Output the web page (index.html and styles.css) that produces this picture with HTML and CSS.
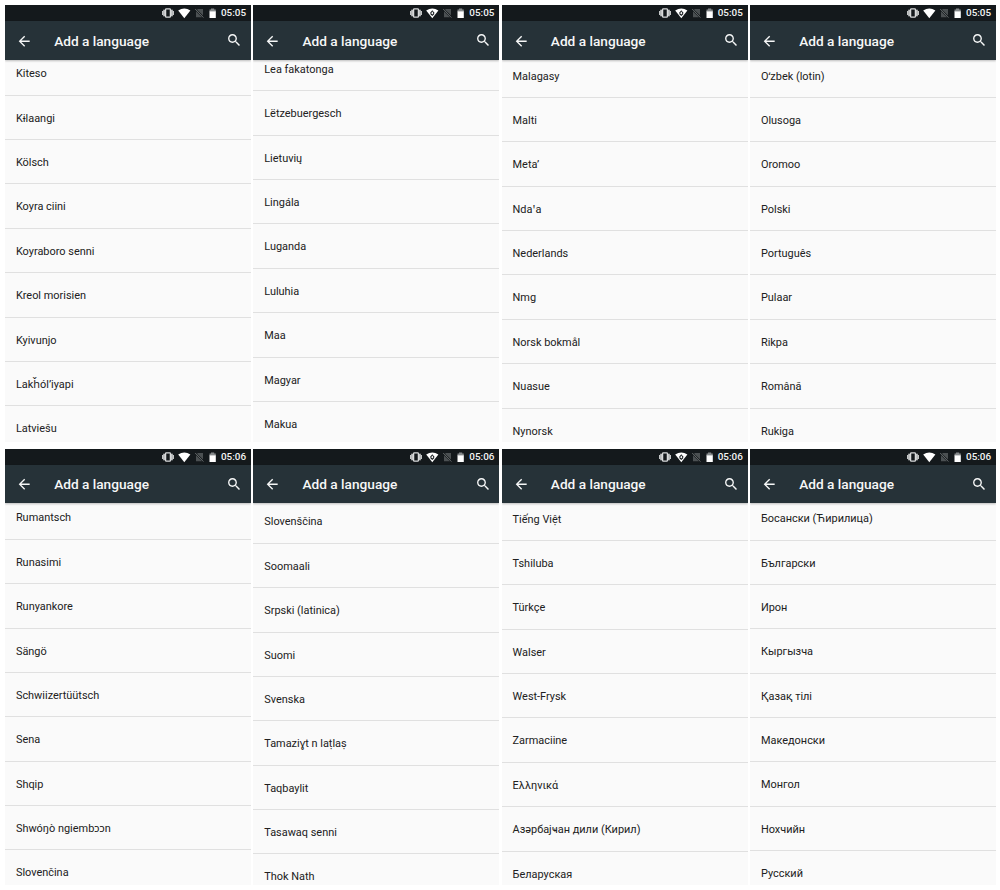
FILE: index.html
```
<!DOCTYPE html>
<html lang="en">
<head>
<meta charset="utf-8">
<title>Add a language</title>
<link rel="stylesheet" href="styles.css">
</head>
<body>
<main class="board" id="board"></main>
<template id="screen">
  <section class="screen">
    <div class="status">
      <svg class="status-icons" viewBox="0 0 56 16">
        <g fill="#c4c6c7"><rect x="1" y="6" width="1.5" height="4"/><rect x="2.2" y="4.7" width="1.8" height="6.6"/><rect x="11.5" y="6" width="1.5" height="4"/><rect x="10" y="4.7" width="1.8" height="6.6"/></g>
        <rect x="4.6" y="3.8" width="4.8" height="8.4" rx=".7" fill="none" stroke="#d8dadb" stroke-width="1.3"/>
        <path d="M17.2 5.4Q23.3 1.4 29.4 5.4L23.3 13.2Z" fill="#fff"/>
        <path class="notch" d="M23.3 5.2L25.2 7.4V9.2L23.3 10.9 21.4 9.2V7.4Z" fill="#14191c"/>
        <path class="notch" d="M23.3 6.6L24.4 8.2 23.3 9.6 22.2 8.2Z" fill="#fff"/>
        <path d="M37 4H42V10.4L36 4.8ZM35 6.2L41 12.2H35Z" fill="#4b5052"/>
        <path d="M34.2 4L42.4 12.6" stroke="#6c7072" stroke-width=".9"/>
        <path d="M50 3.6H53.2V4.6H54.8V7H48.5V4.6H50Z" fill="#85898b"/>
        <rect x="48.5" y="6.4" width="6.3" height="6.6" fill="#fff"/>
      </svg>
      <span class="clock"></span>
    </div>
    <header class="bar">
      <svg class="icon" viewBox="0 0 24 24"><path d="M20 11H7.83l5.59-5.59L12 4l-8 8 8 8 1.41-1.41L7.83 13H20v-2z"/></svg>
      <h1 class="title">Add a language</h1>
      <svg class="icon search" viewBox="0 0 24 24"><path d="M15.5 14h-.79l-.28-.27C15.41 12.59 16 11.11 16 9.5 16 5.91 13.09 3 9.5 3S3 5.91 3 9.5 5.91 16 9.5 16c1.61 0 3.09-.59 4.23-1.57l.27.28v.79l5 4.99L20.49 19l-4.99-5zm-6 0C7.01 14 5 11.99 5 9.5S7.01 5 9.5 5 14 7.01 14 9.5 11.99 14 9.5 14z"/></svg>
    </header>
    <div class="view"><ul class="list"></ul></div>
  </section>
</template>
<script src="app.js"></script>
</body>
</html>
```
FILE: styles.css
```
* { box-sizing: border-box; }
body { margin: 0; background: #fff; font-family: Roboto, "Noto Sans", "DejaVu Sans", sans-serif; }
.board {
  display: grid;
  grid-template-columns: repeat(4, 246px);
  grid-auto-rows: 436.5px;
  gap: 7.2px 2.35px;
  padding: 5px;
  height: 890px;
  overflow: hidden;
}
.screen { display: flex; flex-direction: column; overflow: hidden; background: #fafafa; }
.status {
  flex: none;
  height: 16px;
  padding-right: 5.5px;
  display: flex;
  align-items: center;
  justify-content: flex-end;
  background: #14191c;
  color: #f3f4f4;
}
.status-icons { width: 56px; height: 16px; margin-right: 4px; }
.notch { display: none; }
.secured .notch { display: inline; }
.clock { width: 24.5px; font-size: 9.9px; line-height: 16px; font-weight: 500; white-space: nowrap; }
.bar {
  flex: none;
  height: 38.5px;
  padding: 1px 8.4px 0 10.9px;
  display: flex;
  align-items: center;
  background: #263238;
  color: #f6f7f7;
  box-shadow: 0 1px 2px rgba(0, 0, 0, .25);
  position: relative;
}
.icon { width: 16.4px; height: 16.4px; fill: currentColor; flex: none; }
.search { margin-bottom: 1px; }
.title { flex: 1; margin: 0 0 0 21.9px; font-size: 13.67px; line-height: 18px; font-weight: 500; }
.view { flex: 1; min-height: 0; overflow: hidden; }
.list { list-style: none; margin: 0; padding: 0; }
.row {
  height: 44.38px;
  padding: 0 10.9px;
  border-bottom: 1px solid #e0e0e0;
  font-size: 10.93px;
  line-height: 46px;
  color: #212121;
  white-space: nowrap;
}
```
FILE: app.js
```
// shift: how far each list is scrolled, in pixels
const screens = [
  { time: "05:05", shift: 8.2, rows: ["Kiteso", "Kɨlaangi", "Kölsch", "Koyra ciini", "Koyraboro senni", "Kreol morisien", "Kyivunjo", "Lakȟólʼiyapi", "Latviešu"] },
  { time: "05:05", secured: true, shift: 12.6, rows: ["Lea fakatonga", "Lëtzebuergesch", "Lietuvių", "Lingála", "Luganda", "Luluhia", "Maa", "Magyar", "Makua"] },
  { time: "05:05", secured: true, shift: 5.9, rows: ["Malagasy", "Malti", "Metaʼ", "Ndaꞌa", "Nederlands", "Nmg", "Norsk bokmål", "Nuasue", "Nynorsk"] },
  { time: "05:05", shift: 5.9, rows: ["Oʻzbek (lotin)", "Olusoga", "Oromoo", "Polski", "Português", "Pulaar", "Rikpa", "Română", "Rukiga"] },
  { time: "05:06", shift: 7.8, rows: ["Rumantsch", "Runasimi", "Runyankore", "Sängö", "Schwiizertüütsch", "Sena", "Shqip", "Shwóŋò ngiembɔɔn", "Slovenčina"] },
  { time: "05:06", secured: true, shift: 3.8, rows: ["Slovenščina", "Soomaali", "Srpski (latinica)", "Suomi", "Svenska", "Tamaziɣt n laṭlaṣ", "Taqbaylit", "Tasawaq senni", "Thok Nath"] },
  { time: "05:06", secured: true, shift: 6.6, rows: ["Tiếng Việt", "Tshiluba", "Türkçe", "Walser", "West-Frysk", "Zarmaciine", "Ελληνικά", "Азәрбајҹан дили (Кирил)", "Беларуская"] },
  { time: "05:06", shift: 7, rows: ["Босански (Ћирилица)", "Български", "Ирон", "Кыргызча", "Қазақ тілі", "Македонски", "Монгол", "Нохчийн", "Русский"] }
];
const board = document.getElementById("board");
const template = document.getElementById("screen");
for (const data of screens) {
  const node = template.content.cloneNode(true);
  if (data.secured) node.querySelector(".screen").classList.add("secured");
  node.querySelector(".clock").textContent = data.time;
  const list = node.querySelector(".list");
  list.style.marginTop = -data.shift + "px";
  for (const name of data.rows) {
    const row = document.createElement("li");
    row.className = "row";
    row.textContent = name;
    list.append(row);
  }
  board.append(node);
}
```
